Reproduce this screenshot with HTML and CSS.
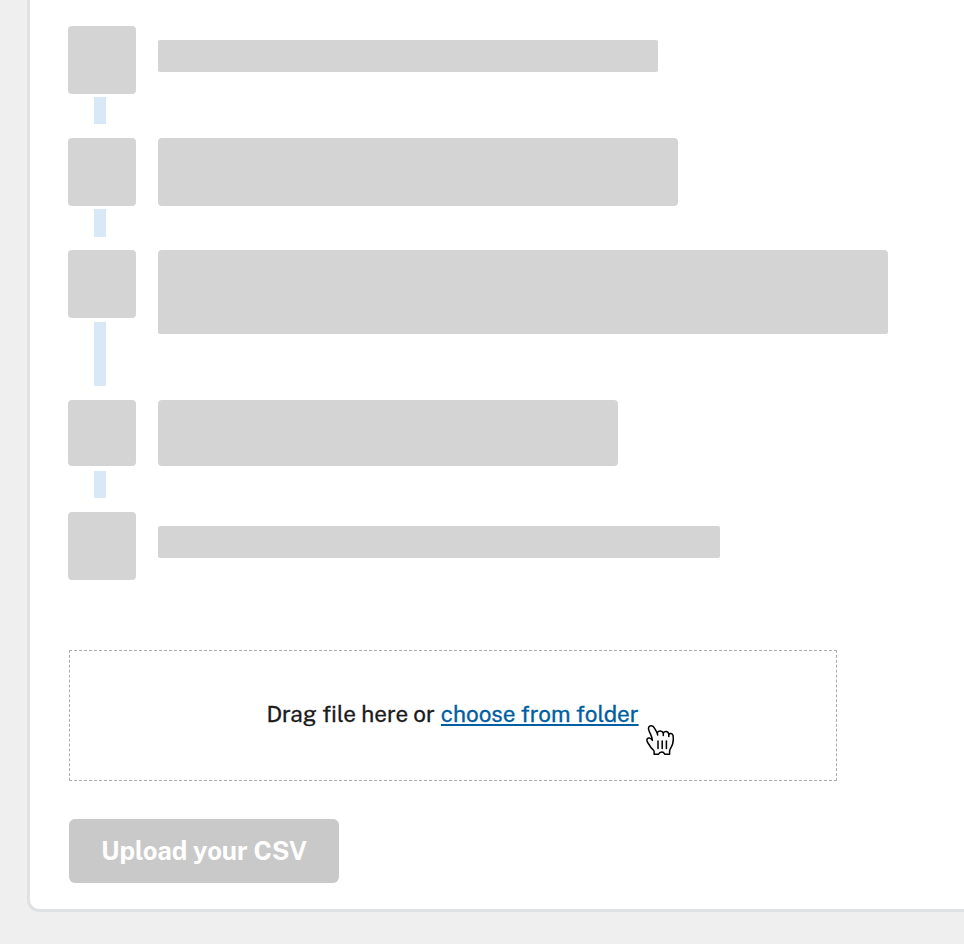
FILE: index.html
```
<!DOCTYPE html>
<html lang="en">
<head>
<meta charset="utf-8">
<title>Upload your CSV</title>
<link rel="stylesheet" href="styles.css">
</head>
<body>
<main class="card">
  <ol class="steps">
    <li class="step step-1"><div class="rail"><span class="marker"></span><span class="line"></span></div><span class="bar"></span></li>
    <li class="step step-2"><div class="rail"><span class="marker"></span><span class="line"></span></div><span class="bar"></span></li>
    <li class="step step-3"><div class="rail"><span class="marker"></span><span class="line"></span></div><span class="bar"></span></li>
    <li class="step step-4"><div class="rail"><span class="marker"></span><span class="line"></span></div><span class="bar"></span></li>
    <li class="step step-5"><div class="rail"><span class="marker"></span></div><span class="bar"></span></li>
  </ol>
  <div class="dropzone">
    <p class="hint"><span class="drag">Drag file here or</span><a class="choose" href="#">choose from folder</a></p>
    <svg class="cursor" width="30" height="32" viewBox="0 0 30 32" aria-hidden="true">
      <path d="M7.4 16.4C6.6 15.1 5.8 14.4 4.8 14.1C2.8 13.6 1.5 15 2 16.9C2.5 19.1 4.2 20.4 5.3 22.6C6.5 24.9 8.9 25.7 9.1 27.4V30.2H13.5C14.2 28.7 15.6 28.1 17 28.1C18.3 28.1 19 28.9 19.7 30.2H24.6V27C25 24.3 27 22.4 27.7 19.7C28.4 16.9 28.6 14.5 28.1 11.7C27.6 9.3 24.8 8.9 23.8 10.2C23.4 7.2 19.8 6.7 18.3 8.9C17.3 6.4 13.6 6.2 12.2 8.8L9.3 3.9C8 1.3 4.8 1.2 3.7 3.2C3.1 4.3 3.6 5.9 4.3 7.5C5.4 10 7.1 12.6 7.4 16.4Z" />
      <path d="M12.2 8.8L12.7 11M18.3 8.9V11.4M23.8 10.2V12.4M13 17V24.6M17.2 17V24.6M21.4 17V24.6" />
    </svg>
  </div>
  <button class="upload" type="button" disabled>Upload your CSV</button>
</main>
</body>
</html>
```

FILE: styles.css
```
* { box-sizing: border-box; }

body {
  margin: 0;
  height: 944px;
  overflow: hidden;
  background: #efefef;
  font-family: "Public Sans", Inter, "Liberation Sans", sans-serif;
}

.card {
  height: 912px;
  margin-left: 27px;
  padding: 26px 0 0 38px;
  background: #fff;
  border: solid #dfe1e2;
  border-width: 0 0 3px 3px;
  border-bottom-left-radius: 12px;
}

.steps {
  margin: 0;
  padding: 0;
  list-style: none;
}

.step {
  display: flex;
  align-items: flex-start;
  gap: 22px;
  height: 112px;
}

.rail {
  width: 68px;
  display: flex;
  flex-direction: column;
}

.marker {
  height: 68px;
  background: #d4d4d4;
  border-radius: 4px;
}

.line {
  width: 12px;
  height: 27px;
  margin: 3px 0 0 26px;
  background: #d9e8f6;
}

.bar {
  background: #d4d4d4;
  border-radius: 4px;
}

.step-1 .bar { width: 500px; height: 32px; margin-top: 14px; border-radius: 2px; }
.step-2 .bar { width: 520px; height: 68px; }
.step-2 .line { height: 28px; }
.step-3 { height: 150px; }
.step-3 .bar { width: 730px; height: 84px; border-radius: 4px 4px 2px 2px; }
.step-3 .line { height: 64px; margin-top: 4px; }
.step-4 .marker { height: 66px; }
.step-4 .bar { width: 460px; height: 66px; }
.step-4 .line { margin-top: 5px; }
.step-5 { height: 68px; }
.step-5 .bar { width: 562px; height: 32px; margin-top: 14px; border-radius: 2px; }

.dropzone {
  position: relative;
  display: flex;
  align-items: center;
  justify-content: center;
  width: 768px;
  height: 131px;
  margin: 70px 0 38px 1px;
  border: 1px dashed #a9aeb1;
}

.hint {
  display: flex;
  gap: 6px;
  margin: 0 1px 4px 0;
  font-size: 22.5px;
  line-height: 32px;
  color: #1b1b1b;
  -webkit-text-stroke: 0.3px currentColor;
  white-space: nowrap;
}

.choose {
  color: #005ea2;
  text-decoration: underline;
  text-decoration-thickness: 2px;
  text-underline-offset: 2px;
}

.cursor {
  position: absolute;
  left: 575px;
  top: 73px;
  fill: #f8f8f8;
  stroke: #000;
  stroke-width: 1.5;
  stroke-linecap: round;
  stroke-linejoin: round;
}

.upload {
  display: block;
  width: 270px;
  height: 64px;
  margin-left: 1px;
  padding: 0;
  border: 0;
  border-radius: 6px;
  background: #c9c9c9;
  color: #fff;
  font: 700 25.6px/64px "Public Sans", Inter, "Liberation Sans", sans-serif;
}
```
